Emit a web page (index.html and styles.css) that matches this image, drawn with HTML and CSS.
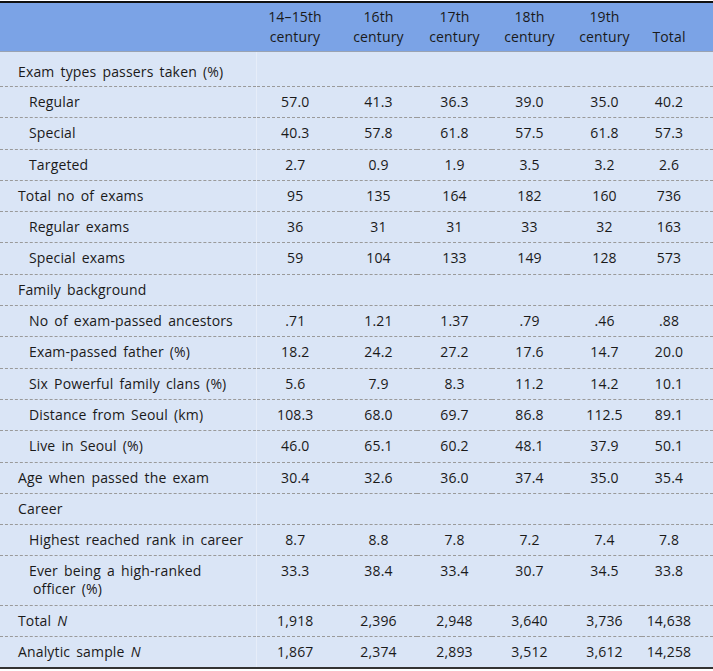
FILE: index.html
```html
<!DOCTYPE html>
<html>
<head>
<meta charset="utf-8">
<link rel="stylesheet" href="styles.css">
</head>
<body>
<table class="t">
  <colgroup>
    <col class="c-label">
    <col class="c1">
    <col class="c2">
    <col class="c3">
    <col class="c4">
    <col class="c5">
    <col class="c6">
  </colgroup>
  <thead>
    <tr>
      <th class="lab"></th>
      <th class="d first">14–15th century</th>
      <th class="d">16th century</th>
      <th class="d">17th century</th>
      <th class="d">18th century</th>
      <th class="d">19th century</th>
      <th class="d last">Total</th>
    </tr>
  </thead>
  <tbody>
    <tr class="top"><td class="sec">Exam types passers taken (%)</td><td class="first"></td><td></td><td></td><td></td><td></td><td class="last"></td></tr>
    <tr><td class="sub">Regular</td><td class="first">57.0</td><td>41.3</td><td>36.3</td><td>39.0</td><td>35.0</td><td class="last">40.2</td></tr>
    <tr><td class="sub">Special</td><td class="first">40.3</td><td>57.8</td><td>61.8</td><td>57.5</td><td>61.8</td><td class="last">57.3</td></tr>
    <tr><td class="sub">Targeted</td><td class="first">2.7</td><td>0.9</td><td>1.9</td><td>3.5</td><td>3.2</td><td class="last">2.6</td></tr>
    <tr><td class="sec">Total no of exams</td><td class="first">95</td><td>135</td><td>164</td><td>182</td><td>160</td><td class="last">736</td></tr>
    <tr><td class="sub">Regular exams</td><td class="first">36</td><td>31</td><td>31</td><td>33</td><td>32</td><td class="last">163</td></tr>
    <tr><td class="sub">Special exams</td><td class="first">59</td><td>104</td><td>133</td><td>149</td><td>128</td><td class="last">573</td></tr>
    <tr><td class="sec">Family background</td><td class="first"></td><td></td><td></td><td></td><td></td><td class="last"></td></tr>
    <tr><td class="sub">No of exam-passed ancestors</td><td class="first">.71</td><td>1.21</td><td>1.37</td><td>.79</td><td>.46</td><td class="last">.88</td></tr>
    <tr><td class="sub">Exam-passed father (%)</td><td class="first">18.2</td><td>24.2</td><td>27.2</td><td>17.6</td><td>14.7</td><td class="last">20.0</td></tr>
    <tr><td class="sub">Six Powerful family clans (%)</td><td class="first">5.6</td><td>7.9</td><td>8.3</td><td>11.2</td><td>14.2</td><td class="last">10.1</td></tr>
    <tr><td class="sub">Distance from Seoul (km)</td><td class="first">108.3</td><td>68.0</td><td>69.7</td><td>86.8</td><td>112.5</td><td class="last">89.1</td></tr>
    <tr><td class="sub">Live in Seoul (%)</td><td class="first">46.0</td><td>65.1</td><td>60.2</td><td>48.1</td><td>37.9</td><td class="last">50.1</td></tr>
    <tr><td class="sec">Age when passed the exam</td><td class="first">30.4</td><td>32.6</td><td>36.0</td><td>37.4</td><td>35.0</td><td class="last">35.4</td></tr>
    <tr><td class="sec">Career</td><td class="first"></td><td></td><td></td><td></td><td></td><td class="last"></td></tr>
    <tr><td class="sub">Highest reached rank in career</td><td class="first">8.7</td><td>8.8</td><td>7.8</td><td>7.2</td><td>7.4</td><td class="last">7.8</td></tr>
    <tr><td class="sub">Ever being a high-ranked officer (%)</td><td class="first">33.3</td><td>38.4</td><td>33.4</td><td>30.7</td><td>34.5</td><td class="last">33.8</td></tr>
    <tr><td class="sec">Total <i>N</i></td><td class="first">1,918</td><td>2,396</td><td>2,948</td><td>3,640</td><td>3,736</td><td class="last">14,638</td></tr>
    <tr class="end"><td class="sec">Analytic sample <i>N</i></td><td class="first">1,867</td><td>2,374</td><td>2,893</td><td>3,512</td><td>3,612</td><td class="last">14,258</td></tr>
  </tbody>
</table>
</body>
</html>
```

FILE: styles.css
```css
html, body {
  margin: 0;
  padding: 0;
  background: #ffffff;
}
body {
  padding-top: 1px;
}
.t {
  width: 713px;
  table-layout: fixed;
  border-collapse: collapse;
  font-family: "Open Sans", "Noto Sans", sans-serif;
  font-size: 14px;
  letter-spacing: 0.15px;
  word-spacing: 2.3px;
  color: #1a1a1a;
  background: #dae5f6;
  border-top: 2px solid #111111;
  border-bottom: 2px solid #333333;
}
.c-label { width: 256px; }
.c1 { width: 84px; }
.c2 { width: 77px; }
.c3 { width: 75px; }
.c4 { width: 75px; }
.c5 { width: 75px; }
.c6 { width: 71px; }

thead th {
  background: #7ba3e6;
  font-weight: normal;
  line-height: 20px;
  padding: 4px 4px 4px 4px;
  vertical-align: bottom;
  border-bottom: 1px solid #9aa3b2;
}
th.d { text-align: center; }

td {
  line-height: 18px;
  padding: 6px 4px 6.3px 4px;
  text-align: center;
  vertical-align: top;
  border-bottom: 1px dashed #9a9a9a;
}
tr.top td {
  padding-top: 11px;
  padding-bottom: 5px;
}
tr.end td { border-bottom: none; }

.first { padding-right: 10px; }
td.first { border-left: 1px solid #e6edf9; }
.last { padding-left: 0; padding-right: 17px; }

td.sec {
  text-align: left;
  padding-left: 18px;
}
td.sub {
  text-align: left;
  padding-left: 33px;
  padding-right: 12px;
  text-indent: -4px;
}
```
